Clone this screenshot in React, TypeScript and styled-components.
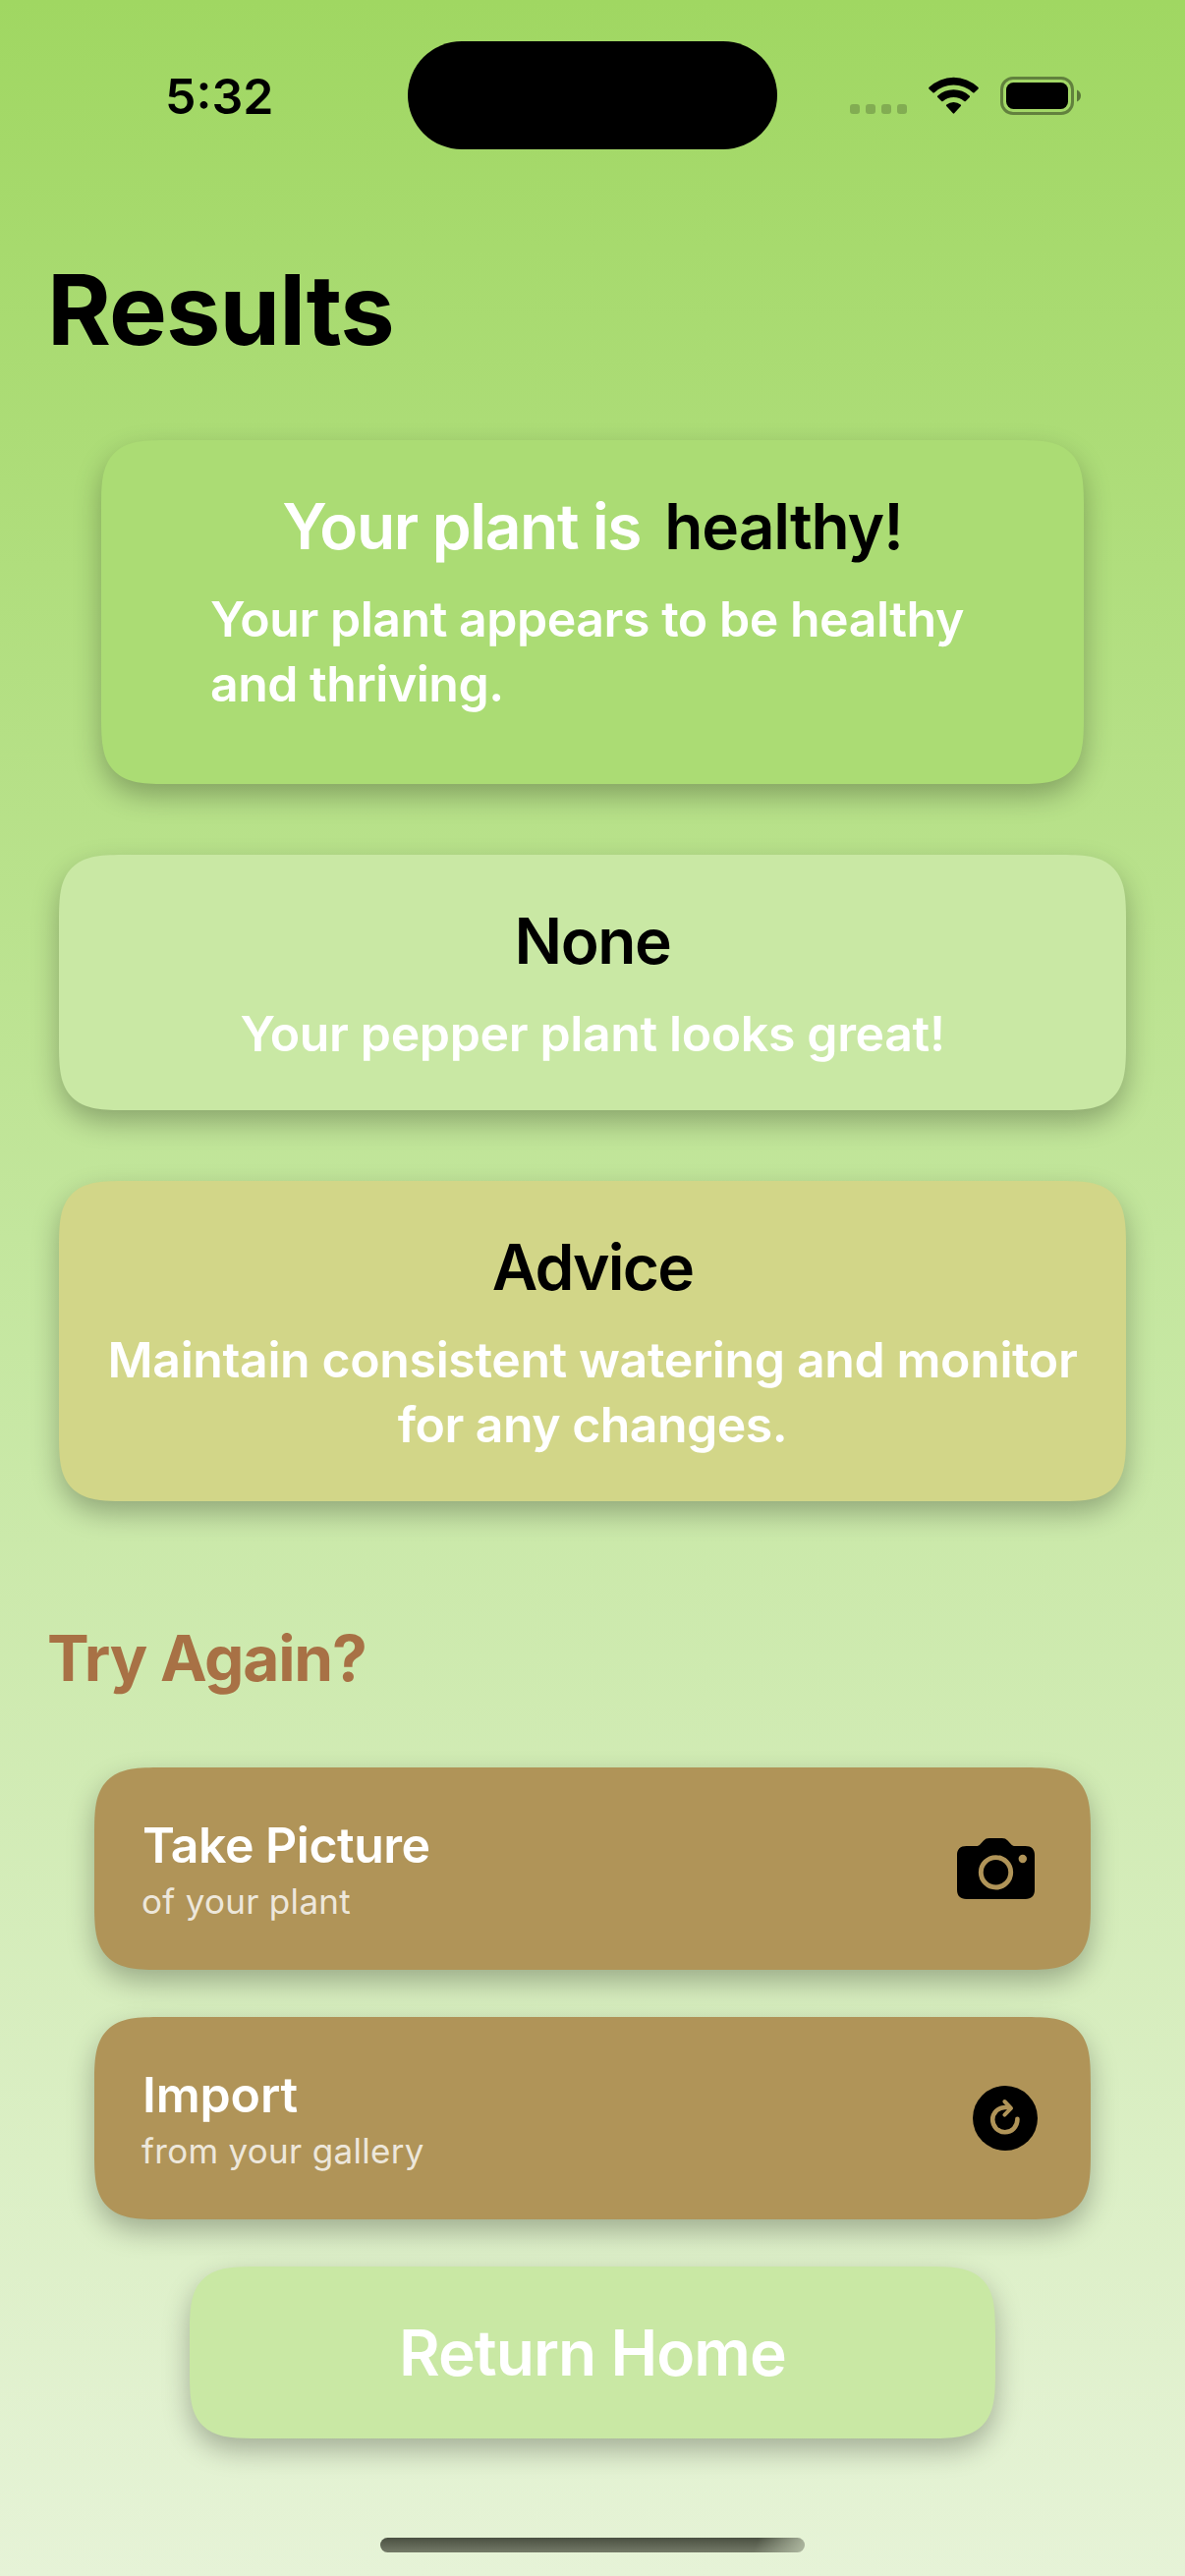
import React from 'react';
import styled, { createGlobalStyle } from 'styled-components';

const GlobalStyle = createGlobalStyle`
  *, *::before, *::after { box-sizing: border-box; }
  body { margin: 0; font-family: Inter, "Liberation Sans", sans-serif; }
`;

const Screen = styled.div`
  display: flex;
  flex-direction: column;
  align-items: center;
  width: 1206px;
  height: 2622px;
  overflow: hidden;
  color: #000;
  background: linear-gradient(180deg, #a0d762 0%, #c3e69d 48%, #e6f3d7 100%);
`;

const StatusBar = styled.header`
  display: grid;
  grid-template-columns: 415px 376px 415px;
  align-items: center;
  flex: none;
  width: 100%;
  height: 194px;
`;

const Clock = styled.time`
  padding: 2px 0 0 168px;
  font-size: 50px;
  line-height: 60px;
  font-weight: 600;
`;

const Island = styled.div`
  height: 110px;
  border-radius: 55px;
  background: #000;
`;

const StatusIcons = styled.div`
  display: flex;
  align-items: center;
  padding: 1px 0 0 74px;
`;

const SignalDots = styled.div`
  display: flex;
  gap: 6px;
  align-self: flex-end;
  margin: 0 22px 1px 0;
`;

const Dot = styled.span`
  width: 10px;
  height: 10px;
  border-radius: 3px;
  background: rgba(0, 0, 0, 0.2);
`;

const Wifi = styled.svg`
  width: 51px;
  height: 39px;
  margin-right: 22px;
`;

const Battery = styled.svg`
  width: 83px;
  height: 39px;
`;

const Title = styled.h1`
  align-self: flex-start;
  margin: 61px 0 73px 48px;
  font-size: 99px;
  line-height: 120px;
  font-weight: 700;
  letter-spacing: -0.9px;
`;

const Card = styled.section<{ $width: number; $height: number; $color: string }>`
  display: flex;
  flex-direction: column;
  align-items: center;
  gap: 19px;
  flex: none;
  width: ${(p) => p.$width}px;
  height: ${(p) => p.$height}px;
  padding-top: 46px;
  border-radius: 69px;
  corner-shape: superellipse(1.7);
  background: ${(p) => p.$color};
  box-shadow: 0 12px 28px rgba(0, 0, 0, 0.28);

  & + & { margin-top: 72px; }
`;

const HeadingRow = styled.div`
  display: flex;
  gap: 24px;
`;

const Heading = styled.h2<{ $tracking: number; $light?: boolean }>`
  margin: 0;
  font-size: 64px;
  line-height: 84px;
  font-weight: 600;
  letter-spacing: ${(p) => p.$tracking}px;
  white-space: nowrap;
  color: ${(p) => (p.$light ? '#fff' : '#000')};
`;

const Body = styled.p<{ $align?: 'left' | 'center' }>`
  width: ${(p) => (p.$align === 'left' ? '778px' : 'auto')};
  margin: 0;
  font-size: 50px;
  line-height: 66px;
  font-weight: 600;
  text-align: ${(p) => p.$align ?? 'center'};
  color: #fff;
`;

const Line = styled.span<{ $tracking: number }>`
  display: block;
  letter-spacing: ${(p) => p.$tracking}px;
  white-space: nowrap;
`;

const SectionTitle = styled.h2`
  align-self: flex-start;
  margin: 118px 0 69px 48px;
  font-size: 64px;
  line-height: 84px;
  font-weight: 700;
  letter-spacing: -1.22px;
  color: #a87145;
`;

const Actions = styled.nav`
  display: flex;
  flex-direction: column;
  align-items: center;
  gap: 48px;
`;

const ActionButton = styled.button<{ $inset: number }>`
  display: flex;
  align-items: center;
  justify-content: space-between;
  width: 1014px;
  height: 206px;
  padding: 0 ${(p) => p.$inset}px 0 48px;
  border: 0;
  border-radius: 69px;
  corner-shape: superellipse(1.7);
  font-family: inherit;
  text-align: left;
  color: #fff;
  background: #b09458;
  box-shadow: 0 12px 28px rgba(0, 0, 0, 0.28);
`;

const ActionText = styled.span`
  display: flex;
  flex-direction: column;
  gap: 5px;
`;

const ActionTitle = styled.span<{ $tracking: number }>`
  padding-left: 1px;
  font-size: 50px;
  line-height: 60px;
  font-weight: 600;
  letter-spacing: ${(p) => p.$tracking}px;
`;

const ActionHint = styled.span`
  font-size: 35px;
  line-height: 44px;
  letter-spacing: 0.3px;
  color: rgba(255, 255, 255, 0.8);
`;

const HomeButton = styled.button`
  width: 820px;
  height: 175px;
  padding: 1px 0 0;
  border: 0;
  border-radius: 69px;
  corner-shape: superellipse(1.7);
  font-family: inherit;
  font-size: 64px;
  line-height: 84px;
  font-weight: 600;
  letter-spacing: -0.92px;
  color: #fff;
  background: #c9e8a4;
  box-shadow: 0 12px 28px rgba(0, 0, 0, 0.28);
`;

const HomeIndicator = styled.div`
  flex: none;
  width: 432px;
  height: 15px;
  margin-top: 101px;
  border-radius: 8px;
  background:
    linear-gradient(110deg, rgba(176, 186, 162, 0) 88%, rgba(176, 186, 162, 0.9) 99%),
    linear-gradient(180deg, #4a5041, #747a68);
`;

const WifiIcon = () => (
  <Wifi viewBox="0 0 51 39" aria-hidden="true">
    <path d="M0.4 12.4 Q-0.2 11.6 0.6 10.8 A36 36 0 0 1 50.4 10.8 Q51.2 11.6 50.6 12.4 L46.6 16.2 Q45.9 16.9 45.1 16.2 A29 29 0 0 0 5.9 16.2 Q5.1 16.9 4.4 16.2 Z" />
    <path d="M9.2 21 Q8.5 20.2 9.3 19.5 A24 24 0 0 1 41.7 19.5 Q42.5 20.2 41.8 21 L37.8 25 Q37.1 25.7 36.3 25 A16.4 16.4 0 0 0 14.7 25 Q13.9 25.7 13.2 25 Z" />
    <path d="M18.2 30 Q17.5 29.2 18.3 28.5 A11.4 11.4 0 0 1 32.7 28.5 Q33.5 29.2 32.8 30 L26.2 37.3 Q25.5 38 24.8 37.3 Z" />
  </Wifi>
);

const BatteryIcon = () => (
  <Battery viewBox="0 0 83 39" aria-hidden="true">
    <rect x="1.5" y="1.5" width="72" height="36" rx="11.5" fill="none" stroke="#000" strokeOpacity="0.4" strokeWidth="3" />
    <rect x="6" y="6" width="63" height="27" rx="7.5" />
    <path d="M78 13.5 C80.4 14.5 82 16.8 82 19.5 C82 22.2 80.4 24.5 78 25.5 Z" fillOpacity="0.45" />
  </Battery>
);

const CameraIcon = () => (
  <svg width="79" height="62" viewBox="0 0 79 62" aria-hidden="true">
    <path d="M9.5 8 H19.5 C21.4 8 22.5 7.4 23.8 6 L27 2.6 C28.7 0.8 30.2 0 32.8 0 H45.8 C48.4 0 49.9 0.8 51.6 2.6 L54.8 6 C56.1 7.4 57.2 8 59.1 8 H69.5 C75.7 8 79 11.2 79 17.2 V52.6 C79 58.8 75.7 62 69.5 62 H9.5 C3.3 62 0 58.8 0 52.6 V17.2 C0 11.2 3.3 8 9.5 8 Z" />
    <circle cx="39.5" cy="34.8" r="15.2" fill="none" stroke="#b09458" strokeWidth="4.9" />
    <circle cx="66.8" cy="21" r="4.2" fill="#b09458" />
  </svg>
);

const RefreshIcon = () => (
  <svg width="66" height="66" viewBox="0 0 66 66" aria-hidden="true">
    <circle cx="33" cy="33" r="33" />
    <g fill="none" stroke="#b09458" strokeLinecap="round" strokeLinejoin="round">
      <path d="M45.4 33.8 V34.6 A12.6 12.6 0 1 1 32.8 22 H36.5" strokeWidth="4.6" />
      <path d="M32.4 16 L39 22.9 L32.4 29.6" strokeWidth="4" />
    </g>
    <path d="M34 18 L40.5 22.9 L34 28 L36 24 L34 22 Z" fill="#b09458" />
  </svg>
);

export default function App() {
  return (
    <>
      <GlobalStyle />
      <Screen>
        <StatusBar>
          <Clock>5:32</Clock>
          <Island />
          <StatusIcons>
            <SignalDots>
              <Dot /><Dot /><Dot /><Dot />
            </SignalDots>
            <WifiIcon />
            <BatteryIcon />
          </StatusIcons>
        </StatusBar>

        <Title>Results</Title>

        <Card $width={1000} $height={350} $color="#abdc74">
          <HeadingRow>
            <Heading $tracking={-1.34} $light>Your plant is</Heading>
            <Heading $tracking={-1.08}>healthy!</Heading>
          </HeadingRow>
          <Body $align="left">
            <Line $tracking={-0.46}>Your plant appears to be healthy</Line>
            <Line $tracking={-0.5}>and thriving.</Line>
          </Body>
        </Card>

        <Card $width={1086} $height={260} $color="#c9e8a4">
          <Heading $tracking={-1.4}>None</Heading>
          <Body><Line $tracking={-0.37}>Your pepper plant looks great!</Line></Body>
        </Card>

        <Card $width={1086} $height={326} $color="#d2d688">
          <Heading $tracking={-1.8}>Advice</Heading>
          <Body>
            <Line $tracking={-0.38}>Maintain consistent watering and monitor</Line>
            <Line $tracking={-0.53}>for any changes.</Line>
          </Body>
        </Card>

        <SectionTitle>Try Again?</SectionTitle>

        <Actions>
          <ActionButton $inset={57}>
            <ActionText>
              <ActionTitle $tracking={-0.5}>Take Picture</ActionTitle>
              <ActionHint>of your plant</ActionHint>
            </ActionText>
            <CameraIcon />
          </ActionButton>
          <ActionButton $inset={54}>
            <ActionText>
              <ActionTitle $tracking={-0.15}>Import</ActionTitle>
              <ActionHint>from your gallery</ActionHint>
            </ActionText>
            <RefreshIcon />
          </ActionButton>
          <HomeButton>Return Home</HomeButton>
        </Actions>

        <HomeIndicator />
      </Screen>
    </>
  );
}
